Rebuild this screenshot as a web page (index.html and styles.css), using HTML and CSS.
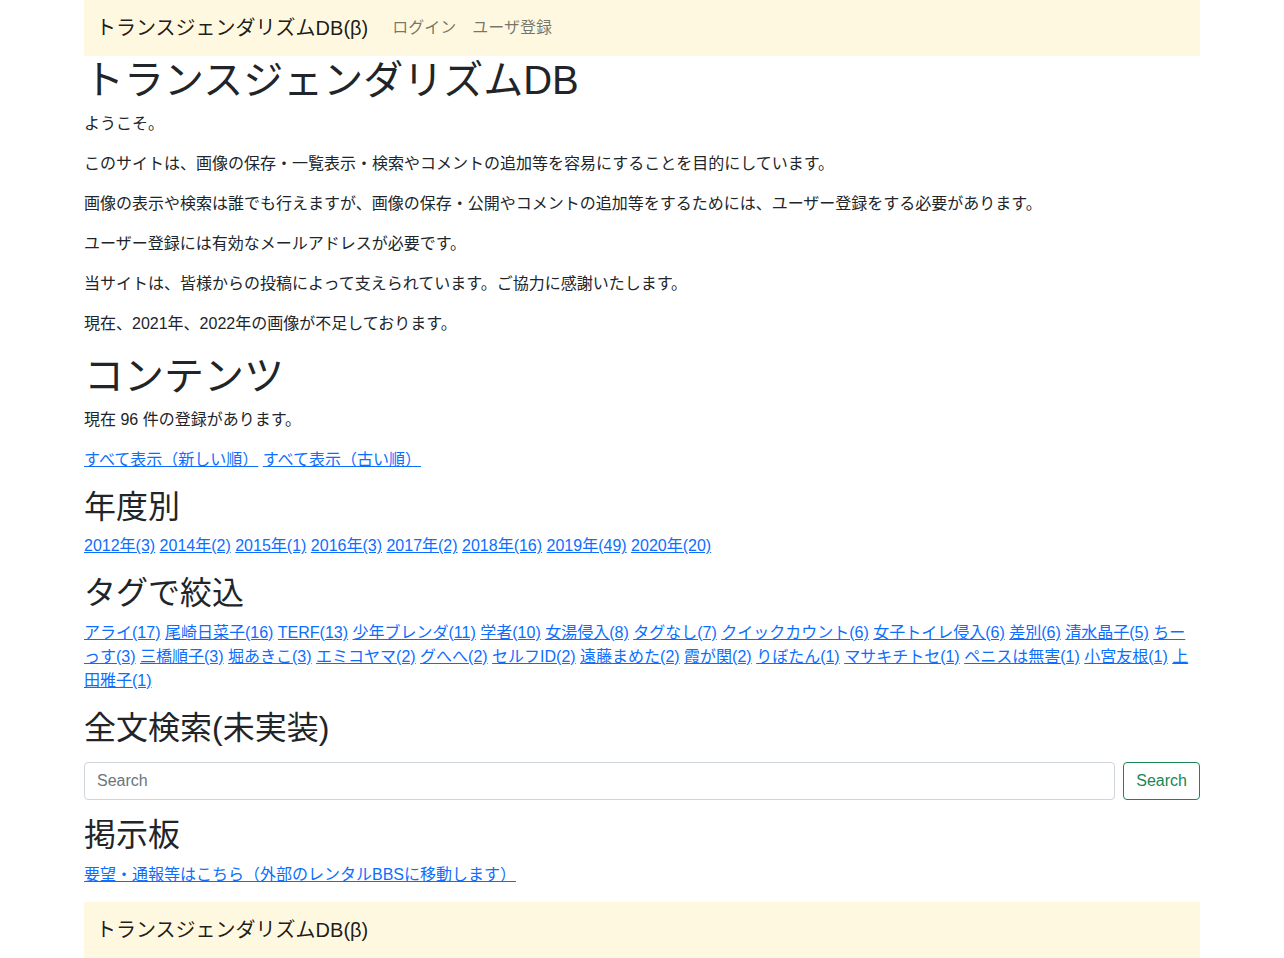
FILE: index.html
```html
<!DOCTYPE html>
<html lang="ja">
<head>
<meta charset="UTF-8" />
<meta name="viewport" content="width=device-width, initial-scale=1" />
<title>トランスジェンダリズムDB(β)</title>
<link rel="stylesheet" href="styles.css">
</head>
<body>

<div class="container">
  <nav class="navbar">
    <a class="brand" href="#">トランスジェンダリズムDB(β)</a>
    <ul class="nav-links">
      <li><a href="#">ログイン</a></li>
      <li><a href="#">ユーザ登録</a></li>
    </ul>
  </nav>

  <h1>トランスジェンダリズムDB</h1>
  <p>ようこそ。</p>
  <p>このサイトは、画像の保存・一覧表示・検索やコメントの追加等を容易にすることを目的にしています。</p>
  <p>画像の表示や検索は誰でも行えますが、画像の保存・公開やコメントの追加等をするためには、ユーザー登録をする必要があります。</p>
  <p>ユーザー登録には有効なメールアドレスが必要です。</p>
  <p>当サイトは、皆様からの投稿によって支えられています。ご協力に感謝いたします。</p>
  <p>現在、2021年、2022年の画像が不足しております。</p>

  <h1>コンテンツ</h1>
  <p>現在 96 件の登録があります。</p>
  <p>
    <a href="#">すべて表示（新しい順）</a>
    <a href="#">すべて表示（古い順）</a>
  </p>

  <h2>年度別</h2>
  <p>
    <a href="#">2012年(3)</a>
    <a href="#">2014年(2)</a>
    <a href="#">2015年(1)</a>
    <a href="#">2016年(3)</a>
    <a href="#">2017年(2)</a>
    <a href="#">2018年(16)</a>
    <a href="#">2019年(49)</a>
    <a href="#">2020年(20)</a>
  </p>

  <h2>タグで絞込</h2>
  <p>
    <a href="#">アライ(17)</a>
    <a href="#">尾崎日菜子(16)</a>
    <a href="#">TERF(13)</a>
    <a href="#">少年ブレンダ(11)</a>
    <a href="#">学者(10)</a>
    <a href="#">女湯侵入(8)</a>
    <a href="#">タグなし(7)</a>
    <a href="#">クイックカウント(6)</a>
    <a href="#">女子トイレ侵入(6)</a>
    <a href="#">差別(6)</a>
    <a href="#">清水晶子(5)</a>
    <a href="#">ちーっす(3)</a>
    <a href="#">三橋順子(3)</a>
    <a href="#">堀あきこ(3)</a>
    <a href="#">エミコヤマ(2)</a>
    <a href="#">グへへ(2)</a>
    <a href="#">セルフID(2)</a>
    <a href="#">遠藤まめた(2)</a>
    <a href="#">霞が関(2)</a>
    <a href="#">りぼたん(1)</a>
    <a href="#">マサキチトセ(1)</a>
    <a href="#">ペニスは無害(1)</a>
    <a href="#">小宮友根(1)</a>
    <a href="#">上田雅子(1)</a>
  </p>

  <h2>全文検索(未実装)</h2>
  <form class="search-form">
    <input type="search" placeholder="Search" />
    <button type="submit">Search</button>
  </form>

  <h2>掲示板</h2>
  <p><a href="#">要望・通報等はこちら（外部のレンタルBBSに移動します）</a></p>

  <nav class="navbar footer">
    <a class="brand" href="#">トランスジェンダリズムDB(β)</a>
  </nav>
</div>

</body>
</html>
```

FILE: styles.css
```css
/* --- 全体 --- */
body {
  margin: 0;
  font-family: "Liberation Sans", "Noto Sans CJK JP", sans-serif;
  font-size: 16px;
  line-height: 1.5;
  color: #212529;
  background-color: #fff;
}
.container {
  max-width: 1116px;
  margin: 0 auto;
  padding: 0 12px;
}
a {
  color: #0d6efd;
}
p {
  margin: 0 0 16px 0;
}
h1, h2 {
  margin: 0 0 8px 0;
  font-weight: 400;
  line-height: 1.2;
}
h1 {
  font-size: 40px;
}
h2 {
  font-size: 32px;
}

/* ナビバー */
.navbar {
  display: flex;
  align-items: center;
  background-color: #fff8e1;
  height: 56px;
  padding: 0 12px;
}
.brand {
  font-size: 20px;
  color: rgba(0, 0, 0, 0.9);
  text-decoration: none;
  margin-right: 16px;
}
.nav-links {
  list-style: none;
  display: flex;
  margin: 0;
  padding: 0;
}
.nav-links a {
  display: block;
  padding: 8px;
  color: rgba(0, 0, 0, 0.55);
  text-decoration: none;
}
.footer {
  margin-top: -1px;
}

/* 検索 */
.search-form {
  display: flex;
  gap: 8px;
  margin: 15px 0 16px 0;
}
.search-form input {
  flex: 1;
  height: 38px;
  box-sizing: border-box;
  padding: 6px 12px;
  font-family: inherit;
  font-size: 16px;
  color: #212529;
  border: 1px solid #ced4da;
  border-radius: 4px;
}
.search-form input::placeholder {
  color: #6c757d;
}
.search-form button {
  height: 38px;
  padding: 6px 12px;
  font-family: inherit;
  font-size: 16px;
  color: #198754;
  background: transparent;
  border: 1px solid #198754;
  border-radius: 4px;
  cursor: pointer;
}
```
